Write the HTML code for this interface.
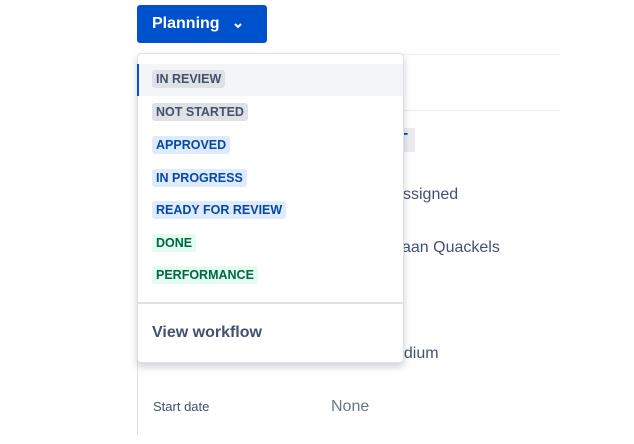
<!DOCTYPE html>
<html><head><style>
body{margin:0;width:634px;height:444px;background:#fff;font-family:"Liberation Sans",sans-serif;position:relative;overflow:hidden}
.a{position:absolute}
.btn{left:137px;top:5px;width:130px;height:38px;background:#0052cc;border-radius:3px;color:#fff;font-weight:bold;font-size:16px}
.menu{left:137px;top:53px;width:265px;height:308px;background:#fff;border:1px solid #dfe1e6;border-radius:4px;box-shadow:0 4px 8px rgba(9,30,66,.2)}
.loz{position:absolute;left:14px;height:18px;line-height:18px;padding:0 4px;border-radius:3px;font-size:12.5px;font-weight:bold}
.g{background:#dfe1e6;color:#42526e}.b{background:#deebff;color:#0747a6}.gr{background:#e3fcef;color:#006644}
.bt{color:#42526e;font-size:16px}
</style></head><body>
<div class="a" style="left:403px;top:54px;width:157px;height:1px;background:#ebecf0"></div>
<div class="a" style="left:403px;top:110px;width:157px;height:1px;background:#ebecf0"></div>
<div class="a" style="left:137px;top:355px;width:1px;height:80px;background:#dfe1e6"></div>
<div class="a" style="left:398px;top:128px;width:17px;height:24px;background:#ebecf0;color:#0747a6;font-size:16px;font-weight:bold;line-height:24px">T</div>
<div class="a bt" style="left:403px;top:186px">ssigned</div>
<div class="a bt" style="left:402px;top:239px">aan Quackels</div>
<div class="a bt" style="left:395px;top:345px">edium</div>
<div class="a" style="left:153px;top:399px;font-size:13px;color:#42526e">Start date</div>
<div class="a" style="left:331px;top:398px;font-size:16px;color:#6b778c">None</div>
<div class="a btn"><span class="a" style="left:15px;top:10px">Planning</span>
<svg class="a" style="left:96px;top:17px" width="10" height="8" viewBox="0 0 10 8"><path d="M2 2l3 3 3-3" stroke="#fff" stroke-width="2" fill="none"/></svg></div>
<div class="a menu">
<div class="a" style="left:-1px;top:10px;width:266px;height:32px;background:#f4f5f7;border-left:2px solid #0052cc;box-sizing:border-box"></div>
<div class="loz g" style="top:16px">IN REVIEW</div>
<div class="loz g" style="top:49px">NOT STARTED</div>
<div class="loz b" style="top:82px">APPROVED</div>
<div class="loz b" style="top:115px">IN PROGRESS</div>
<div class="loz b" style="top:147px">READY FOR REVIEW</div>
<div class="loz gr" style="top:180px">DONE</div>
<div class="loz gr" style="top:212px">PERFORMANCE</div>
<div class="a" style="left:0;top:248px;width:265px;height:2px;background:#dfe1e6"></div>
<div class="a" style="left:14px;top:270px;font-size:16px;font-weight:bold;color:#42526e">View workflow</div>
</div>
</body></html>
